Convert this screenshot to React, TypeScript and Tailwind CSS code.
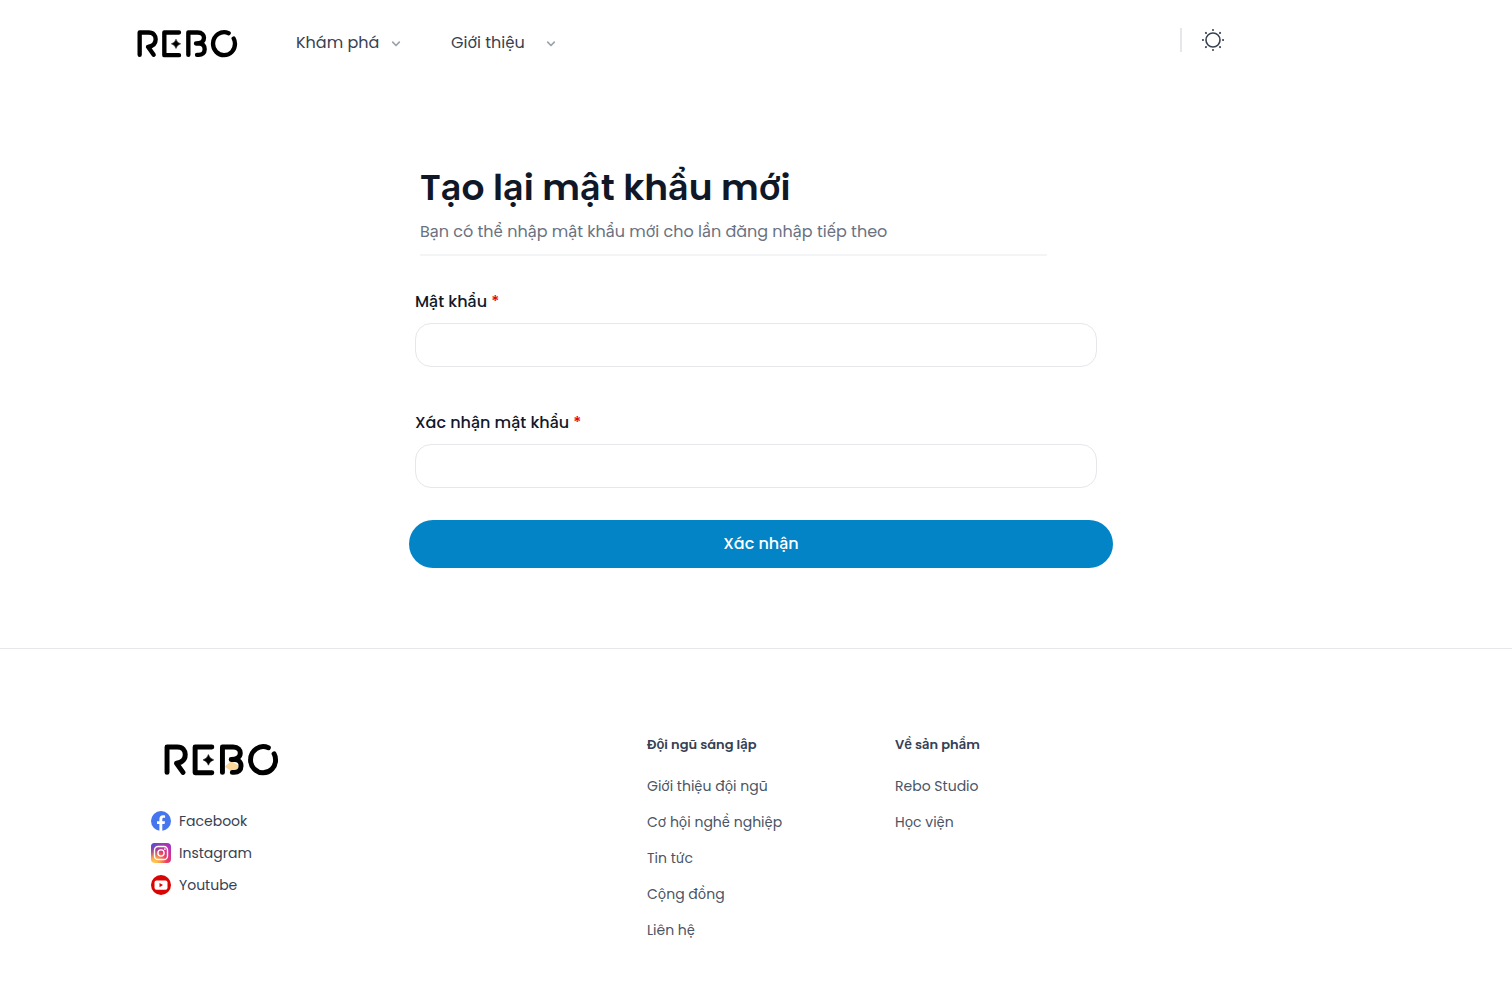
import { useId } from "react";

const navItems = [
  { label: "Khám phá", className: "w-[105px]" },
  { label: "Giới thiệu", className: "w-[105px]" },
];

const columns = [
  {
    title: "Đội ngũ sáng lập",
    links: ["Giới thiệu đội ngũ", "Cơ hội nghề nghiệp", "Tin tức", "Cộng đồng", "Liên hệ"],
  },
  { title: "Về sản phẩm", links: ["Rebo Studio", "Học viện"] },
];

function Logo({ className, accent = false }: { className: string; accent?: boolean }) {
  return (
    <svg viewBox="51 44 303 86" className={className} role="img" aria-label="Rebo">
      {accent && <path d="M211 106 L228 91 L250 104 L244 116 H226 Z" fill="#fed89b" />}
      <g fill="none" stroke="#000" strokeWidth="13" strokeLinecap="round" strokeLinejoin="round">
        <path d="M59 121 V54 H86 C101 54 107 64 107 74 C107 88 98 95 84 97 L101 121" />
        <path d="M177 54 H133 V122 H177" />
        <path d="M205 121 V54 H233 C247 54 252 62 252 70 C252 80 244 87 228 87 H238 C248 87 254 94 254 104 C254 115 247 121 236 121 H231" />
        <path d="M326 56 C304 46 279 62 279 88 C279 107 294 122 312 122 C331 122 345 107 345 88 C345 82 344 77 341 72" />
      </g>
      <path d="M168 74 Q171 85 182 88 Q171 91 168 102 Q165 91 154 88 Q165 85 168 74 Z" stroke="#000" strokeWidth="1.5" />
    </svg>
  );
}

function Chevron() {
  return (
    <svg viewBox="0 0 10 10" className="mt-[2px] size-[10px]" fill="none" stroke="#9ca3af" strokeWidth="1.7" strokeLinecap="round" strokeLinejoin="round" aria-hidden="true">
      <path d="M1.7 3.2 L5 6.5 L8.3 3.2" />
    </svg>
  );
}

function SunIcon() {
  return (
    <svg viewBox="0 0 24 24" className="size-6" fill="none" stroke="#374151" aria-hidden="true">
      <circle cx="12" cy="12" r="7" strokeWidth="1.6" />
      <path d="M12 1.9v.1M12 22v.1M1.9 12h.1M22 12h.1M4.9 4.9l.1.1M19 19l.1.1M19.1 4.9l-.1.1M5 19l-.1.1" strokeWidth="2" strokeLinecap="round" />
    </svg>
  );
}

function FacebookIcon() {
  return (
    <svg viewBox="0 0 20 20" className="size-5" aria-hidden="true">
      <circle cx="10" cy="10" r="10" fill="#4676ed" />
      <path d="M8.4 20v-7H6v-2.8h2.4V8c0-2.5 1.4-3.8 3.6-3.8.9 0 1.8.1 2.1.2v2.4h-1.3c-1.2 0-1.5.7-1.5 1.5v1.9h2.7l-.4 2.8h-2.3v6.9c-.8.1-2 .2-2.9.1z" fill="#fff" />
    </svg>
  );
}

function InstagramIcon() {
  const id = useId();
  return (
    <svg viewBox="0 0 20 20" className="size-5" aria-hidden="true">
      <defs>
        <radialGradient id={id + "w"} cx="0.15" cy="1" r="1.2">
          <stop offset="0" stopColor="#ffd34f" />
          <stop offset="0.25" stopColor="#fba04b" />
          <stop offset="0.55" stopColor="#ee3b62" />
          <stop offset="0.8" stopColor="#c632a4" />
          <stop offset="1" stopColor="#9b36c4" />
        </radialGradient>
        <radialGradient id={id + "b"} cx="0" cy="0" r="0.75">
          <stop offset="0" stopColor="#4b50d8" />
          <stop offset="1" stopColor="#4b50d8" stopOpacity="0" />
        </radialGradient>
      </defs>
      <rect width="20" height="20" rx="4" fill={`url(#${id}w)`} />
      <rect width="20" height="20" rx="4" fill={`url(#${id}b)`} />
      <rect x="3.5" y="3.5" width="13" height="13" rx="3.6" fill="none" stroke="#fff" strokeWidth="1.4" />
      <circle cx="10" cy="10" r="3.1" fill="none" stroke="#fff" strokeWidth="1.4" />
      <circle cx="13.9" cy="6.1" r="0.9" fill="#fff" />
    </svg>
  );
}

function YoutubeIcon() {
  return (
    <svg viewBox="0 0 20 20" className="size-5" aria-hidden="true">
      <circle cx="10" cy="10" r="10" fill="#d90404" />
      <rect x="3.5" y="5.4" width="13" height="9.4" rx="2" fill="#fff" />
      <path d="M8.5 8 L12 10.1 L8.5 12.2 Z" fill="#d90404" />
    </svg>
  );
}

const socials = [
  { label: "Facebook", Icon: FacebookIcon },
  { label: "Instagram", Icon: InstagramIcon },
  { label: "Youtube", Icon: YoutubeIcon },
];

function PasswordField({ label }: { label: string }) {
  const id = useId();
  return (
    <div>
      <label htmlFor={id} className="block text-base font-medium text-gray-900">
        {label} <span className="text-red-600">*</span>
      </label>
      <input
        id={id}
        type="password"
        required
        className="mt-[9px] block h-11 w-full rounded-2xl border border-gray-200 bg-white px-4 outline-none focus:border-sky-500"
      />
    </div>
  );
}

export default function App() {
  return (
    <div className="min-h-screen bg-white font-['Poppins','Inter',sans-serif] text-[#374151]">
      <header className="mx-auto flex max-w-[1280px] items-center justify-between pr-[171px] pl-[21px]">
        <div className="flex h-[86px] items-center">
          <a href="#home" className="mr-[58px]">
            <Logo className="h-[29px] w-[101px]" />
          </a>
          <nav className="flex gap-[50px]">
            {navItems.map((item) => (
              <button key={item.label} type="button" className={`flex items-center justify-between text-base ${item.className}`}>
                {item.label}
                <Chevron />
              </button>
            ))}
          </nav>
        </div>
        <div className="flex items-center gap-[19px] pb-[6px]">
          <span className="h-6 w-[2px] bg-gray-200" />
          <button type="button" aria-label="Chế độ sáng" className="flex">
            <SunIcon />
          </button>
        </div>
      </header>

      <main className="mx-auto max-w-[704px] pt-[78px] pb-20">
        <div className="mr-[61px] ml-4 border-b-2 border-gray-100 pb-[10px]">
          <h1 className="text-4xl leading-[48px] font-semibold text-gray-900">Tạo lại mật khẩu mới</h1>
          <p className="mt-2 text-base leading-6 text-gray-500">Bạn có thể nhập mật khẩu mới cho lần đăng nhập tiếp theo</p>
        </div>
        <form className="pt-[34px]" onSubmit={(event) => event.preventDefault()}>
          <div className="mx-[11px] flex flex-col gap-11">
            <PasswordField label="Mật khẩu" />
            <PasswordField label="Xác nhận mật khẩu" />
          </div>
          <div className="-mr-[5px] ml-[5px] pt-8">
            <button type="submit" className="h-12 w-full rounded-full bg-[#0284c7] text-base font-medium text-white">
              Xác nhận
            </button>
          </div>
        </form>
      </main>

      <footer className="border-t border-gray-200">
        <div className="mx-auto grid max-w-[1210px] grid-cols-5 gap-[30px] pt-[86px] pb-[45px]">
          <div className="col-span-2 pt-2">
            <a href="#home" className="ml-[13px] block w-[115px]">
              <Logo className="h-[33px] w-[115px]" accent />
            </a>
            <ul className="mt-[35px] flex flex-col gap-3">
              {socials.map(({ label, Icon }) => (
                <li key={label}>
                  <a href={`#${label.toLowerCase()}`} className="flex items-center gap-2 text-sm leading-5">
                    <Icon />
                    {label}
                  </a>
                </li>
              ))}
            </ul>
          </div>
          {columns.map((column) => (
            <div key={column.title}>
              <h2 className="text-[13px] leading-5 font-semibold text-gray-700">{column.title}</h2>
              <ul className="mt-[21px] flex flex-col gap-4">
                {column.links.map((link) => (
                  <li key={link} className="text-sm leading-5">
                    <a href="#footer" className="text-gray-600">{link}</a>
                  </li>
                ))}
              </ul>
            </div>
          ))}
        </div>
      </footer>
    </div>
  );
}
